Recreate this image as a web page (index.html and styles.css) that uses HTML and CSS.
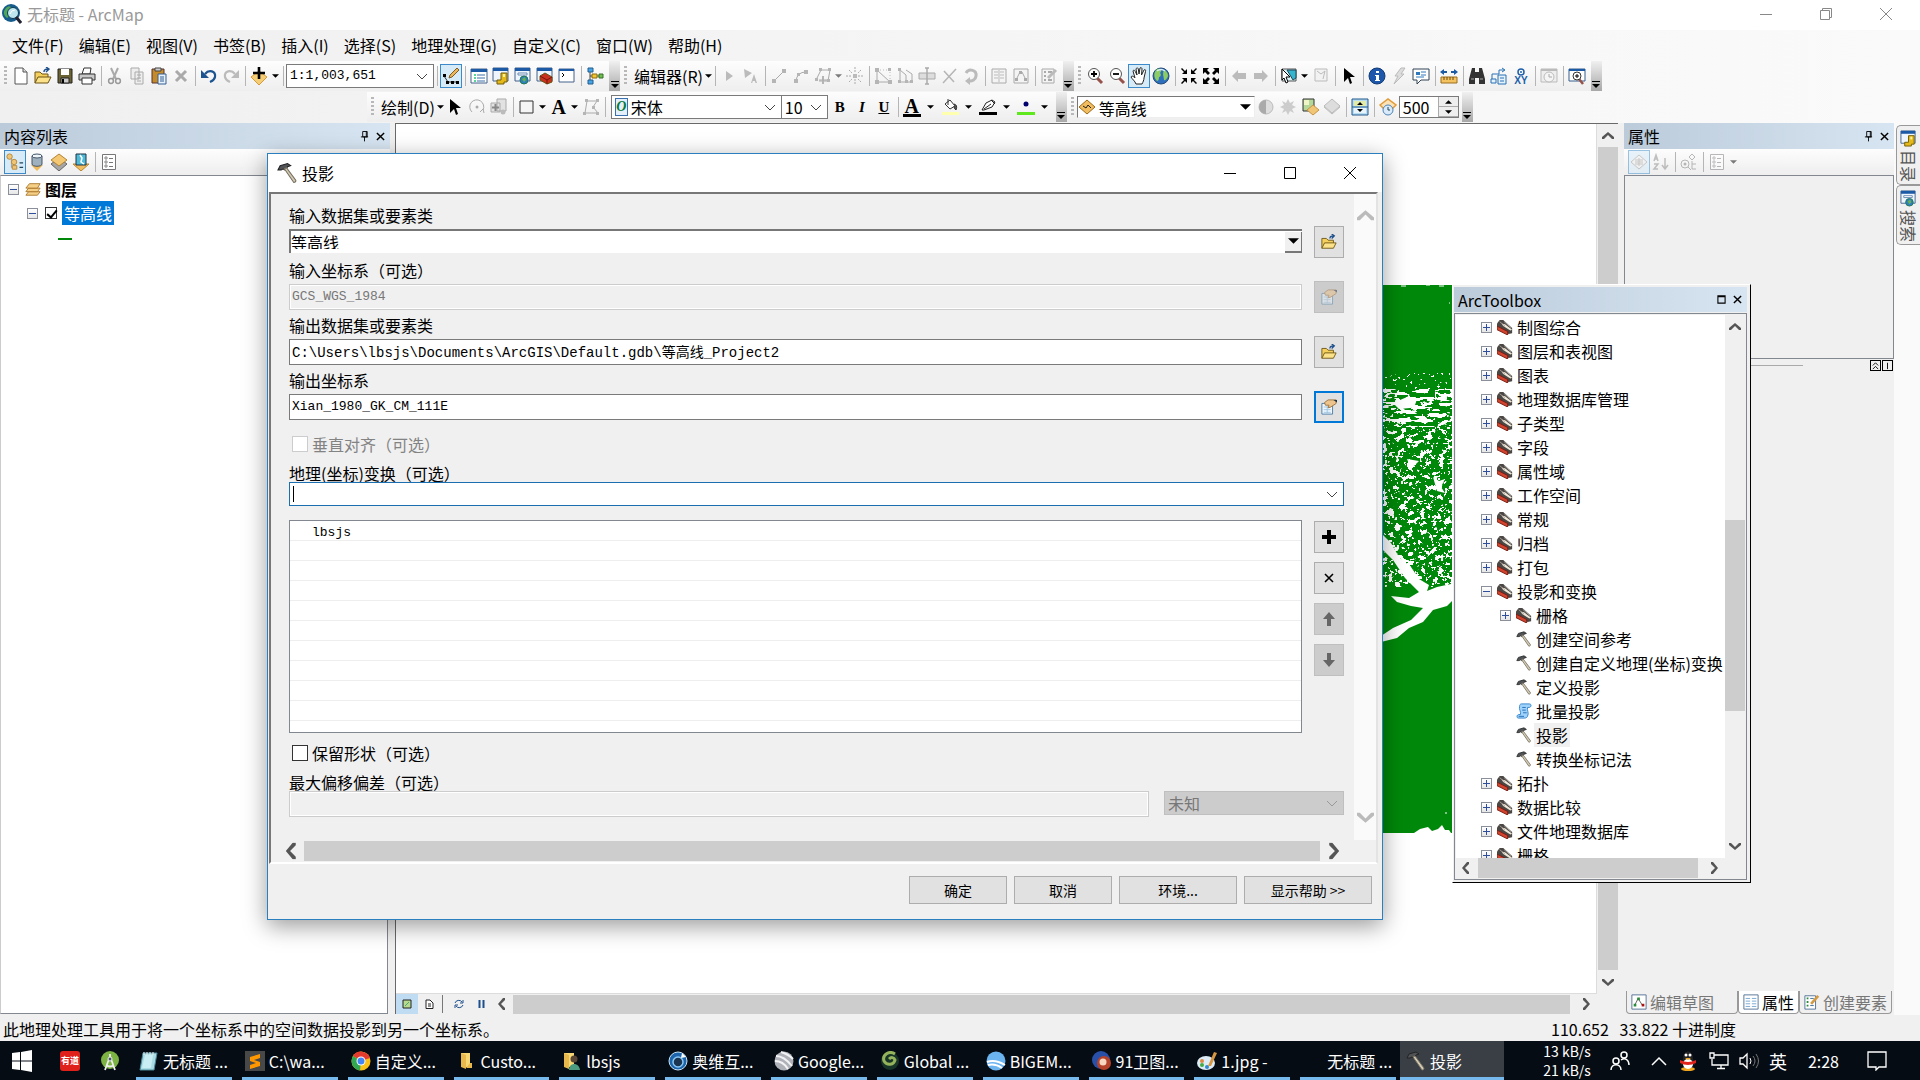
FILE: index.html
```html
<!DOCTYPE html>
<html lang="zh-CN">
<head>
    <meta charset="UTF-8">
    <meta name="viewport" content="width=device-width, initial-scale=1.0">
    <title>无标题 - ArcMap</title>
    <link rel="stylesheet" href="styles.css">
</head>
<body>
    <!-- icon sprite -->
    <svg class="sprite" width="0" height="0" aria-hidden="true">
        <symbol id="i-down" viewBox="0 0 8 4"><path d="M0 0h8L4 4z"/></symbol>
        <symbol id="i-chev" viewBox="0 0 12 7"><path d="M1 1l5 5 5-5" fill="none" stroke="currentColor"/></symbol>
        <symbol id="i-arrow" viewBox="0 0 12 8"><path d="M0 7V5l6-5 6 5v2H10L6 3 2 7z" fill="currentColor"/></symbol>
        <symbol id="i-x" viewBox="0 0 10 10"><path d="M1 1l8 8M9 1l-8 8" stroke="currentColor" stroke-width="1.6"/></symbol>
        <symbol id="i-pin" viewBox="0 0 10 12"><path d="M3 1h5v6H3zM1 7h8M5 7v5M7 1v6" fill="none" stroke="#000"/></symbol>
        <symbol id="i-new" viewBox="0 0 18 18"><path d="M3 1h8l4 4v12H3z" fill="#fff" stroke="#555"/><path d="M11 1v4h4" fill="#ddd" stroke="#555"/></symbol>
        <symbol id="i-open" viewBox="0 0 18 18"><path d="M1 16V5h5l2 2h6v3" fill="#f5cf5c" stroke="#6b5314"/><path d="M1 16l3-6h13l-3 6z" fill="#fbe28a" stroke="#6b5314"/><path d="M10 5c0-2 1-3 4-3M12 0l3 2-3 3" fill="none" stroke="#1c4f8c" stroke-width="1.4"/></symbol>
        <symbol id="i-save" viewBox="0 0 18 18"><path d="M2 2h14v14H2z" fill="#6b6432" stroke="#222"/><path d="M5 2h8v6H5z" fill="#fff"/><path d="M5 11h8v5H5z" fill="#ccc" stroke="#222"/><path d="M6 12h2v4H6z"/></symbol>
        <symbol id="i-print" viewBox="0 0 18 18"><path d="M4 7l2-6h7l-1 6z" fill="#fff" stroke="#333"/><path d="M1 7h16v6H1z" fill="#c9c9c9" stroke="#333"/><path d="M4 11h10v6H4z" fill="#fff" stroke="#333"/></symbol>
        <symbol id="i-cut" viewBox="0 0 18 18"><path d="M5 1l5 11M12 1L7 12" stroke="#aaa" stroke-width="2"/><g fill="none" stroke="#999" stroke-width="1.5"><circle cx="5" cy="14" r="2.4"/><circle cx="12" cy="14" r="2.4"/></g></symbol>
        <symbol id="i-copy" viewBox="0 0 18 18"><path d="M3 1h8v11H3zM7 5h8v12H7z" fill="#eee" stroke="#aaa"/><path d="M9 8h4M9 11h4M9 14h4" stroke="#aaa"/></symbol>
        <symbol id="i-paste" viewBox="0 0 18 18"><path d="M2 2h12v14H2z" fill="#c58a2a" stroke="#533"/><path d="M5 1h6v3H5z" fill="#ccc" stroke="#444"/><path d="M8 7h8v10H8z" fill="#e6f1fc" stroke="#345f92"/><path d="M10 10h4M10 12h4M10 14h4" stroke="#345f92"/></symbol>
        <symbol id="i-del" viewBox="0 0 18 18"><path d="M4 4l10 10M14 4L4 14" stroke="#aaa" stroke-width="3"/></symbol>
        <symbol id="i-undo" viewBox="0 0 18 18"><path d="M5 7c4-5 11-3 10 3-.5 3-3 4-5 5" fill="none" stroke="#1d5390" stroke-width="2.2"/><path d="M1 3v8h8z" fill="#1d5390"/></symbol>
        <symbol id="i-redo" viewBox="0 0 18 18"><path d="M13 7C9 2 2 4 3 10c.5 3 3 4 5 5" fill="none" stroke="#bbb" stroke-width="2.2"/><path d="M17 3v8H9z" fill="#bbb"/></symbol>
        <symbol id="i-add" viewBox="0 0 18 18"><path d="M1 10l8-6 8 6-8 8z" fill="#f5cd75" stroke="#d59b3a"/><path d="M9 0v12M3 6h12" stroke="#000" stroke-width="2.6"/></symbol>
        <symbol id="i-edit" viewBox="0 0 18 18"><path d="M2 9l4 6h10" fill="none" stroke="#333"/><path d="M1 7h3v3H1zM4 14h3v3H4zM9 14h3v3H9zM14 14h3v3h-3z"/><path d="M7 11l1-3 7-7 2 2-7 7z" fill="#edb757" stroke="#805c28"/></symbol>
        <symbol id="i-table" viewBox="0 0 18 18"><path d="M1 2h16v14H1z" fill="#fff" stroke="#44638c"/><path d="M1 2h16v3H1z" fill="#1d5aa5"/><path d="M4 8h2M4 11h2M4 14h2" stroke="#2c7" stroke-width="1.5"/><path d="M7 8h8M7 11h8M7 14h8" stroke="#3d6ea8"/></symbol>
        <symbol id="i-catalog" viewBox="0 0 18 18"><path d="M1 1h15v13H1z" fill="#eef5fc" stroke="#44638c"/><path d="M1 1h15v3H1z" fill="#1d5aa5"/><path d="M9 6h6v9h-3v2H5v-4h4z" fill="#e5b91a" stroke="#725d06"/><path d="M11 7h2v3h-2z" fill="#fff3a8"/></symbol>
        <symbol id="i-search" viewBox="0 0 18 18"><path d="M1 1h15v13H1z" fill="#eef5fc" stroke="#44638c"/><path d="M1 1h15v3H1z" fill="#1d5aa5"/><path d="M4 6h9v2H4z" fill="#fff" stroke="#6b8cb5"/><circle cx="10" cy="13" r="4" fill="#2d7fc4" stroke="#275"/><path d="M8 12l3-2 1 3-2 2z" fill="#6ab04c"/></symbol>
        <symbol id="i-tbx" viewBox="0 0 18 18"><path d="M1 1h15v13H1z" fill="#eef5fc" stroke="#44638c"/><path d="M1 1h15v3H1z" fill="#1d5aa5"/><path d="M4 9l5-3 7 4v5l-5 2-7-4z" fill="#c8321f" stroke="#651"/><path d="M4 9l7 4 5-3M11 13v4" fill="none" stroke="#7a1409"/></symbol>
        <symbol id="i-python" viewBox="0 0 18 18"><path d="M1 2h15v13H1z" fill="#fff" stroke="#44638c"/><path d="M1 3h15" stroke="#1d5aa5" stroke-width="2"/><path d="M4 6l2 2-2 2" fill="none" stroke="#000"/></symbol>
        <symbol id="i-model" viewBox="0 0 18 18"><path d="M4 4v10M4 9h9" stroke="#444"/><path d="M2 1h5v4H2zM2 13h5v4H2z" fill="#45a4e6" stroke="#245d8c"/><path d="M6 7h5v4H6z" fill="#f2c52d" stroke="#8b6b12"/><path d="M13 7h4v4h-4z" fill="#6dc04e" stroke="#376d25"/></symbol>
        <symbol id="i-play" viewBox="0 0 18 18"><path d="M6 4l7 5-7 5z" fill="#bbb"/></symbol>
        <symbol id="i-playa" viewBox="0 0 18 18"><path d="M2 2l8 4-7 5zM9 16l3-9 3 9h-1.500l-.7-2h-2l-.6 2z" fill="#bbb"/></symbol>
        <symbol id="i-line" viewBox="0 0 18 18"><path d="M4 14L14 4" stroke="#aaa"/><path d="M2 12h4v4H2zM12 2h4v4h-4z" fill="#b5b5b5"/></symbol>
        <symbol id="i-arc" viewBox="0 0 18 18"><path d="M4 14Q5 5 14 5" fill="none" stroke="#aaa"/><path d="M2 12h4v4H2zM12 3h4v4h-4zM5 6h3v3H5z" fill="#b5b5b5"/></symbol>
        <symbol id="i-trace" viewBox="0 0 18 18"><path d="M2 13L7 3h9l-2 11H5" fill="none" stroke="#aaa"/><path d="M5 1h3v3H5zM14 1h3v3h-3zM1 11h3v3H1zM13 12h3v3h-3zM8 9h2v8H8z" fill="#b5b5b5"/><path d="M5 13h8" stroke="#aaa"/></symbol>
        <symbol id="i-snap" viewBox="0 0 18 18"><path d="M9 0v6M9 12v6M0 9h6M12 9h6M3 3l3 3M15 3l-3 3M3 15l3-3M15 15l-3-3" stroke="#aaa" stroke-dasharray="2 1"/><path d="M7 7h4v4H7z" fill="#bbb"/></symbol>
        <symbol id="i-shape" viewBox="0 0 18 18"><path d="M3 3v12h13L3 3" fill="none" stroke="#aaa"/><path d="M3 3h13v12" fill="none" stroke="#bbb" stroke-dasharray="1 2"/><path d="M1 1h4v4H1zM1 13h4v4H1zM14 13h4v4h-4zM14 1h3v3h-3z" fill="#b5b5b5"/></symbol>
        <symbol id="i-mirror" viewBox="0 0 18 18"><path d="M4 2v13M4 3l6 5v7H4M10 15h6V7l-6-4" fill="none" stroke="#aaa"/><path d="M2 1h3v3H2zM2 13h3v3H2zM9 13h3v3H9zM14 13h3v3h-3z" fill="#b5b5b5"/></symbol>
        <symbol id="i-split" viewBox="0 0 18 18"><path d="M1 6h16v6H1z" fill="#ddd" stroke="#aaa"/><path d="M9 1v16M7 1h4M7 17h4" fill="none" stroke="#aaa" stroke-width="1.500"/></symbol>
        <symbol id="i-cross" viewBox="0 0 18 18"><path d="M3 16L16 2M4 4l10 11" stroke="#b5b5b5" stroke-width="1.500"/></symbol>
        <symbol id="i-rot" viewBox="0 0 18 18"><path d="M4 6c3-5 11-3 10 3-.5 4-4 5-6 5" fill="none" stroke="#bbb" stroke-width="3"/><path d="M8 10v8l-5-4z" fill="#bbb"/></symbol>
        <symbol id="i-attr" viewBox="0 0 18 18"><path d="M2 2h14v14H2z" fill="#f4f4f4" stroke="#aaa"/><path d="M4 5h4M4 8h4M4 11h4M10 5h4M10 8h4M10 11h4M9 3v12" stroke="#bbb"/></symbol>
        <symbol id="i-sketch" viewBox="0 0 18 18"><path d="M2 2h14v14H2z" fill="#f4f4f4" stroke="#aaa"/><path d="M4 13l4-8h2l4 8" fill="none" stroke="#aaa"/><path d="M3 11h3v3H3zM7 4h3v3H7zM12 11h3v3h-3z" fill="#aaa"/></symbol>
        <symbol id="i-create" viewBox="0 0 18 18"><path d="M2 2h12v14H2z" fill="#f4f4f4" stroke="#aaa"/><path d="M4 5h2M4 9h2M4 13h2M8 5h4M8 13h4" stroke="#aaa" stroke-width="2"/><path d="M8 11l8-8" stroke="#bbb" stroke-width="3"/></symbol>
        <symbol id="i-zin" viewBox="0 0 18 18"><path d="M11 11l5 5" stroke="#96524a" stroke-width="3"/><circle cx="8" cy="7" r="5.500" fill="#fff" stroke="#555"/><path d="M8 4v6M5 7h6" stroke="#000" stroke-width="1.800"/></symbol>
        <symbol id="i-zout" viewBox="0 0 18 18"><path d="M11 11l5 5" stroke="#96524a" stroke-width="3"/><circle cx="8" cy="7" r="5.500" fill="#fff" stroke="#555"/><path d="M5 7h6" stroke="#000" stroke-width="1.800"/></symbol>
        <symbol id="i-hand" viewBox="0 0 18 18"><path d="M6 17c-1-3-4-5-5-7 1-2 3 0 4 1L3 4c1-2 2 0 2.500 1L7 8 6 2c1-2 2-1 2.300 0L9 7l1-6c1-1 2 0 2 1l-.5 6L14 3c1-1 2 0 1.500 1.500L14 11c0 2-1 4-2 6z" fill="#fff" stroke="#222"/></symbol>
        <symbol id="i-globe" viewBox="0 0 18 18"><circle cx="9" cy="9" r="8" fill="#2d6fbd" stroke="#234c78"/><path d="M5 2c5-1 5 2 3 4 2 2 0 4-1 4 0 3-1 4-2 4-3-3-4-8 0-12zM12 3c3 1 4 4 4 6-1 3-3 5-4 4 0-3-2-6 0-10z" fill="#8ccc62"/><path d="M5 4q4-3 8 0" fill="none" stroke="#d7edff" stroke-width="1.500"/></symbol>
        <symbol id="i-fin" viewBox="0 0 18 18"><path d="M2 7h5V2L5 4 2 1 1 2l3 3zM16 7h-5V2l2 2 3-3 1 1-3 3zM2 11h5v5l-2-2-3 3-1-1 3-3zM16 11h-5v5l2-2 3 3 1-1-3-3z"/></symbol>
        <symbol id="i-fout" viewBox="0 0 18 18"><path d="M1 1h6L5 3l3 3-2 2-3-3-2 2zM17 1h-6l2 2-3 3 2 2 3-3 2 2zM1 17h6l-2-2 3-3-2-2-3 3-2-2zM17 17h-6l2-2-3-3 2-2 3 3 2-2z"/></symbol>
        <symbol id="i-back" viewBox="0 0 18 18"><path d="M2 9l6-6v3h8v6H8v3z" fill="#bbb"/></symbol>
        <symbol id="i-fwd" viewBox="0 0 18 18"><path d="M16 9l-6-6v3H2v6h8v3z" fill="#bbb"/></symbol>
        <symbol id="i-select" viewBox="0 0 18 18"><path d="M2 2h14v12H2z" fill="#d9f3f7" stroke="#555"/><path d="M7 3h9v8l-3 2z" fill="#36b5cf" stroke="#245"/><path d="M2 2l8 8H6l2 5-2 1-2-5-2 2z" fill="#fff" stroke="#000"/></symbol>
        <symbol id="i-clear" viewBox="0 0 18 18"><path d="M3 2h12v12H3z" fill="#f2f2f2" stroke="#bbb"/><path d="M5 4l4 3 4-3-2 8" fill="none" stroke="#bbb"/></symbol>
        <symbol id="i-cursor" viewBox="0 0 18 18"><path d="M4 1v14l4-4 2 6 2-1-2-6h5z"/></symbol>
        <symbol id="i-info" viewBox="0 0 18 18"><circle cx="9" cy="9" r="8" fill="#1c57ab" stroke="#123a77"/><path d="M8 4h3v2H8zM7 8h4v5h1v1H7v-1h1V9H7z" fill="#fff"/></symbol>
        <symbol id="i-bolt" viewBox="0 0 18 18"><path d="M11 1h4l-4 6h3L4 17l4-8H5z" fill="#ddd" stroke="#bbb"/></symbol>
        <symbol id="i-popup" viewBox="0 0 18 18"><path d="M1 2h16v11H9l-4 4v-4H1z" fill="#fff" stroke="#345"/><path d="M4 5h4v3H4z" fill="#2e78bd"/><path d="M9 5h5M9 8h5M4 10h8" stroke="#2e78bd"/></symbol>
        <symbol id="i-ruler" viewBox="0 0 18 18"><path d="M1 10h16v6H1z" fill="#f4c360" stroke="#9b6c1d"/><path d="M4 10v3M7 10v3M10 10v3M13 10v3" stroke="#6b4810"/><path d="M0 5l4-3v2h3v2H4v2zM18 5l-4-3v2h-3v2h3v2z" fill="#1d5aa5"/></symbol>
        <symbol id="i-find" viewBox="0 0 18 18"><path d="M4 1h3v4h4V1h3l3 11v5h-6v-6H7v6H1v-5z" fill="#333"/><path d="M3 12h3M12 12h3" stroke="#aaa"/></symbol>
        <symbol id="i-route" viewBox="0 0 18 18"><path d="M2 12V7h7V3h5M12 1l3 2-3 2" fill="none" stroke="#2871b5"/><path d="M1 12h5v4H1zM8 8h8v9H8z" fill="#e5f1fb" stroke="#2871b5"/><path d="M10 11h4M10 14h4" stroke="#2871b5"/></symbol>
        <symbol id="i-time" viewBox="0 0 18 18"><path d="M1 2h16v13H1z" fill="#eee" stroke="#bbb"/><path d="M1 3h16" stroke="#bbb" stroke-width="2"/><circle cx="9" cy="10" r="5" fill="#f5f5f5" stroke="#bbb"/><path d="M9 7v3h3" fill="none" stroke="#aaa"/></symbol>
        <symbol id="i-viewer" viewBox="0 0 18 18"><path d="M1 2h16v12H1z" fill="#fff" stroke="#345c8c"/><path d="M1 3h16" stroke="#1d5aa5" stroke-width="2"/><path d="M11 12l4 5" stroke="#96524a" stroke-width="2.500"/><circle cx="9" cy="9" r="4" fill="#fff" stroke="#333"/><path d="M9 7v4M7 9h4" stroke="#000"/></symbol>
        <symbol id="i-rotd" viewBox="0 0 18 18"><path d="M4 14a7 7 0 1 1 11-2M16 15l-1-4-3 3" fill="none" stroke="#aaa"/><circle cx="9" cy="9" r="1.500" fill="#aaa"/></symbol>
        <symbol id="i-tools" viewBox="0 0 18 18"><path d="M7 1h9v12H7zM1 5h9v9H1z" fill="#e2e2e2" stroke="#aaa"/><path d="M5.500 6v7M2 9.500h7" stroke="#888" stroke-width="2"/><circle cx="13" cy="14" r="2.500" fill="#bbb"/></symbol>
        <symbol id="i-rect" viewBox="0 0 18 18"><path d="M2 3h13v12H2z" fill="#f5f5f5" stroke="#333"/></symbol>
        <symbol id="i-poly" viewBox="0 0 18 18"><path d="M5 3h10l-4 6 5 6H3z" fill="none" stroke="#aaa"/><path d="M3 1h3v3H3zM14 1h3v3h-3zM10 8h3v3h-3zM14 14h3v3h-3zM1 14h3v3H1z" fill="#b5b5b5"/></symbol>
        <symbol id="i-bucket" viewBox="0 0 18 18"><path d="M4 6l5-4 5 6-5 3z" fill="#fff" stroke="#333"/><path d="M7 1v6M13 6q4 1 2 6-2-1-2-4" fill="#555" stroke="#333"/><path d="M1 14h17v3H1z" fill="#ffffb0"/></symbol>
        <symbol id="i-pen" viewBox="0 0 18 18"><path d="M3 12L7 5l6-3 3 2-3 5-8 3zM5 11l7-5M12 2l4 4" fill="#fff" stroke="#222"/><path d="M0 14h18v3H0z"/></symbol>
        <symbol id="i-dot" viewBox="0 0 18 18"><circle cx="9" cy="6" r="2.500" fill="#00006e"/><path d="M0 14h18v3H0z" fill="#5fe81d"/></symbol>
        <symbol id="i-contour" viewBox="0 0 18 18"><path d="M1 9l8-7 8 7-8 7z" fill="#f2bd5e" stroke="#9c6a1c"/><path d="M5 8l3 2 2-3 3 3" fill="none" stroke="#222"/></symbol>
        <symbol id="i-contrast" viewBox="0 0 18 18"><circle cx="9" cy="9" r="7" fill="#ddd" stroke="#bbb"/><path d="M9 2a7 7 0 0 0 0 14z" fill="#aaa"/></symbol>
        <symbol id="i-sun" viewBox="0 0 18 18"><path d="M9 1l2 4 4-2-2 4 4 2-4 2 2 4-4-2-2 4-2-4-4 2 2-4-4-2 4-2-2-4 4 2z" fill="#ccc"/></symbol>
        <symbol id="i-swipe" viewBox="0 0 18 18"><path d="M2 1h11v12H2z" fill="#b4d79a" stroke="#333"/><path d="M3 2h5v5H3z" fill="#f0f5c8"/><path d="M6 12l6-5 6 5-6 5z" fill="#f0c676" stroke="#c69445"/></symbol>
        <symbol id="i-gdiamond" viewBox="0 0 18 18"><path d="M1 8l8-7 8 7-8 7z" fill="#ddd" stroke="#bbb"/><path d="M1 9l8 7 8-7" fill="none" stroke="#bbb"/></symbol>
        <symbol id="i-flick" viewBox="0 0 18 18"><path d="M1 1h16v16H1z" fill="#b8dcf2" stroke="#235b8d"/><path d="M3 3h12v5H3z" fill="#e3ebaa"/><path d="M3 10h12v5H3z" fill="#e8f4fc"/><path d="M1 9h16" stroke="#235b8d"/><path d="M9 4l3 3H6zM9 14l3-3H6z"/></symbol>
        <symbol id="i-dclock" viewBox="0 0 18 18"><path d="M1 7l8-6 8 6-5 5H6z" fill="#fbe3b7" stroke="#e09c38" stroke-width="1.500"/><circle cx="9" cy="12" r="5" fill="#d9ebfb" stroke="#4d82b5"/><path d="M9 9v3h2" fill="none" stroke="#245"/></symbol>
        <symbol id="i-listo" viewBox="0 0 20 20"><path d="M6 5v11h6M6 9h6" fill="none" stroke="#999"/><circle cx="4" cy="4" r="3" fill="#f0c676" stroke="#b78737"/><circle cx="9" cy="10" r="3" fill="#f0c676" stroke="#b78737"/><path d="M7 14h5v4H7z" fill="#f0c676" stroke="#b78737"/><path d="M15 11h4M15 16h4" stroke="#245" stroke-width="1.500"/></symbol>
        <symbol id="i-source" viewBox="0 0 18 18"><path d="M3 12h12l-6 6z" fill="#efbb5c"/><path d="M4 3v8c0 3 10 3 10 0V3" fill="#9fb0bf" stroke="#456"/><ellipse cx="9" cy="3" rx="5" ry="2" fill="#eef5fa" stroke="#456"/></symbol>
        <symbol id="i-vis" viewBox="0 0 18 18"><path d="M1 11l8-6 8 6-8 7z" fill="#a5a5a5" stroke="#666"/><path d="M1 7l8-6 8 6-8 6z" fill="#f4c873" stroke="#b28335"/></symbol>
        <symbol id="i-selt" viewBox="0 0 18 18"><path d="M1 11h16l-8 7z" fill="#f2bd5e" stroke="#b98630"/><path d="M4 1h10v11H4z" fill="#4fbbd8" stroke="#234"/><path d="M8 2l2 3-1 4 3 2" fill="none" stroke="#fff" stroke-width="1.500"/></symbol>
        <symbol id="i-opts" viewBox="0 0 18 18"><path d="M2.500 1.500h13v15h-13z" fill="#fff" stroke="#777"/><path d="M5 4h2v2H5zM5 8h2v2H5zM5 12h2v2H5z" fill="none" stroke="#888"/><path d="M9 5.500h4M9 9.500h4M9 13.500h4" stroke="#777"/></symbol>
        <symbol id="i-layers" viewBox="0 0 18 18"><g fill="#f5cf86" stroke="#a8752a"><path d="M1 16l3-4h13l-3 4z"/><path d="M1 12l3-4h13l-3 4z"/><path d="M1 8l4-5h12l-3 5z"/></g></symbol>
        <symbol id="i-hammer" viewBox="0 0 20 20"><path d="M1 7l2-4 7-2 3 2-3 1-1 2-2 1-1-1-2 1z" fill="#505356" stroke="#222"/><path d="M7 6l2-1 9 12c0 2-1 2-2 2z" fill="#d2cab3" stroke="#746f60"/></symbol>
        <symbol id="i-toolset" viewBox="0 0 18 18"><path d="M0 5l3-4h4l10 9v6l-4 1L0 9z" fill="#4a4745"/><path d="M0 8l12 6v4L0 12z" fill="#d1452f" stroke="#76190e"/><path d="M5 5l4 1 8 6-2 1-8-5z" fill="#efe8d8"/><path d="M3 3l6 5M8 3l8 7" stroke="#a9a39a"/></symbol>
        <symbol id="i-script" viewBox="0 0 18 18"><path d="M6 1h9c3 0 2 4 0 4h-2c-1 3 2 6 0 10-1 2-3 2-4 2H3c-3 0-2-4 0-4h2c1-3-2-6-1-9 0-2 1-3 2-3z" fill="#9fd3fb" stroke="#2c7fc9"/><path d="M7 5h4M7 8h4M8 11h4M3 15h6" stroke="#1c66b0"/></symbol>
        <symbol id="i-prop" viewBox="0 0 18 18"><path d="M1 5h12v12H1z" fill="#eef7fd" stroke="#4479a3"/><path d="M3 9h8M3 12h8M3 15h8M7 8v8" stroke="#9cc4e0"/><path d="M4 4l4-3h9v4l-6 4-3 1 1-3H5z" fill="#edc48c" stroke="#99703d"/><path d="M14 1h4v3z" fill="#234"/></symbol>
        <symbol id="i-plus" viewBox="0 0 16 16"><path d="M8 1v14M1 8h14" stroke="#000" stroke-width="4"/></symbol>
        <symbol id="i-up" viewBox="0 0 16 16"><path d="M8 1l6 7h-4v7H6V8H2z" fill="#666"/></symbol>
    </svg>

    <div class="app">
        <header class="titlebar">
            <svg class="logo" viewBox="0 0 20 20"><circle cx="9" cy="9" r="9" fill="#155b8c"/><path d="M4 4c4-4 7 0 4 4-3 2 0 5-3 6-4-3-4-7-1-10z" fill="#4fa65a"/><circle cx="11" cy="9" r="5.500" fill="#bfe6ef" stroke="#0e3d55"/><path d="M8 10q1-4 5-4" fill="none" stroke="#fff"/><path d="M14 13l5 6" stroke="#223" stroke-width="3"/></svg>
            <span class="title">无标题 - ArcMap</span>
            <div class="win-buttons">
                <button aria-label="最小化"><svg width="12" height="12"><path d="M0 6.500h12" stroke="#888"/></svg></button>
                <button aria-label="还原"><svg width="12" height="12"><path d="M.5 2.500h9v9h-9zM2.500 2V.5h9v9H10" fill="none" stroke="#888"/></svg></button>
                <button aria-label="关闭"><svg width="12" height="12"><path d="M0 0l12 12M12 0L0 12" stroke="#888"/></svg></button>
            </div>
        </header>

        <nav class="menubar">
            <button>文件(F)</button><button>编辑(E)</button><button>视图(V)</button><button>书签(B)</button><button>插入(I)</button><button>选择(S)</button><button>地理处理(G)</button><button>自定义(C)</button><button>窗口(W)</button><button>帮助(H)</button>
        </nav>

        <div class="toolrow">
            <div class="toolbar">
                <i class="grip"></i>
                <button class="tool"><svg><use href="#i-new"/></svg></button>
                <button class="tool"><svg><use href="#i-open"/></svg></button>
                <button class="tool"><svg><use href="#i-save"/></svg></button>
                <button class="tool"><svg><use href="#i-print"/></svg></button>
                <i class="sep"></i>
                <button class="tool"><svg><use href="#i-cut"/></svg></button>
                <button class="tool"><svg><use href="#i-copy"/></svg></button>
                <button class="tool"><svg><use href="#i-paste"/></svg></button>
                <button class="tool"><svg><use href="#i-del"/></svg></button>
                <i class="sep"></i>
                <button class="tool"><svg><use href="#i-undo"/></svg></button>
                <button class="tool"><svg><use href="#i-redo"/></svg></button>
                <i class="sep"></i>
                <button class="tool"><svg><use href="#i-add"/></svg></button>
                <button class="drop"><svg><use href="#i-down"/></svg></button>
                <i class="sep"></i>
                <div class="combo scale"><select aria-label="比例"><option>1:1,003,651</option></select><svg><use href="#i-chev"/></svg></div>
                <i class="sep"></i>
                <button class="tool on"><svg><use href="#i-edit"/></svg></button>
                <i class="sep"></i>
                <button class="tool"><svg><use href="#i-table"/></svg></button>
                <button class="tool"><svg><use href="#i-catalog"/></svg></button>
                <button class="tool"><svg><use href="#i-search"/></svg></button>
                <button class="tool"><svg><use href="#i-tbx"/></svg></button>
                <button class="tool"><svg><use href="#i-python"/></svg></button>
                <i class="sep"></i>
                <button class="tool"><svg><use href="#i-model"/></svg></button>
                <button class="more" aria-label="更多"><svg><use href="#i-down"/></svg></button>
            </div>
            <div class="toolbar">
                <i class="grip"></i>
                <button class="menu">编辑器(R)<svg><use href="#i-down"/></svg></button>
                <i class="sep"></i>
                <button class="tool"><svg><use href="#i-play"/></svg></button>
                <button class="tool"><svg><use href="#i-playa"/></svg></button>
                <i class="sep"></i>
                <button class="tool"><svg><use href="#i-line"/></svg></button>
                <button class="tool"><svg><use href="#i-arc"/></svg></button>
                <button class="tool"><svg><use href="#i-trace"/></svg></button>
                <button class="drop off"><svg><use href="#i-down"/></svg></button>
                <button class="tool"><svg><use href="#i-snap"/></svg></button>
                <i class="sep"></i>
                <button class="tool"><svg><use href="#i-shape"/></svg></button>
                <button class="tool"><svg><use href="#i-mirror"/></svg></button>
                <button class="tool"><svg><use href="#i-split"/></svg></button>
                <button class="tool"><svg><use href="#i-cross"/></svg></button>
                <button class="tool"><svg><use href="#i-rot"/></svg></button>
                <i class="sep"></i>
                <button class="tool"><svg><use href="#i-attr"/></svg></button>
                <button class="tool"><svg><use href="#i-sketch"/></svg></button>
                <i class="sep"></i>
                <button class="tool"><svg><use href="#i-create"/></svg></button>
                <button class="more" aria-label="更多"><svg><use href="#i-down"/></svg></button>
            </div>
            <div class="toolbar">
                <i class="grip"></i>
                <button class="tool"><svg><use href="#i-zin"/></svg></button>
                <button class="tool"><svg><use href="#i-zout"/></svg></button>
                <button class="tool on"><svg><use href="#i-hand"/></svg></button>
                <button class="tool"><svg><use href="#i-globe"/></svg></button>
                <i class="sep"></i>
                <button class="tool"><svg><use href="#i-fin"/></svg></button>
                <button class="tool"><svg><use href="#i-fout"/></svg></button>
                <i class="sep"></i>
                <button class="tool"><svg><use href="#i-back"/></svg></button>
                <button class="tool"><svg><use href="#i-fwd"/></svg></button>
                <i class="sep"></i>
                <button class="tool"><svg><use href="#i-select"/></svg></button>
                <button class="drop"><svg><use href="#i-down"/></svg></button>
                <button class="tool"><svg><use href="#i-clear"/></svg></button>
                <i class="sep"></i>
                <button class="tool"><svg><use href="#i-cursor"/></svg></button>
                <i class="sep"></i>
                <button class="tool"><svg><use href="#i-info"/></svg></button>
                <button class="tool"><svg><use href="#i-bolt"/></svg></button>
                <button class="tool"><svg><use href="#i-popup"/></svg></button>
                <i class="sep"></i>
                <button class="tool"><svg><use href="#i-ruler"/></svg></button>
                <i class="sep"></i>
                <button class="tool"><svg><use href="#i-find"/></svg></button>
                <button class="tool"><svg><use href="#i-route"/></svg></button>
                <button class="tool xy"><svg viewBox="0 0 8 8"><circle cx="4" cy="4" r="3" fill="#fff" stroke="#2060a8" stroke-width="1.500"/><circle cx="4" cy="4" r="1" fill="#2060a8"/></svg>XY</button>
                <i class="sep"></i>
                <button class="tool"><svg><use href="#i-time"/></svg></button>
                <i class="sep"></i>
                <button class="tool"><svg><use href="#i-viewer"/></svg></button>
                <button class="more" aria-label="更多"><svg><use href="#i-down"/></svg></button>
            </div>
        </div>

        <div class="toolrow second">
            <div class="toolbar">
                <i class="grip"></i>
                <button class="menu">绘制(D)<svg><use href="#i-down"/></svg></button>
                <button class="tool"><svg><use href="#i-cursor"/></svg></button>
                <button class="tool"><svg><use href="#i-rotd"/></svg></button>
                <button class="tool"><svg><use href="#i-tools"/></svg></button>
                <i class="sep"></i>
                <button class="tool"><svg><use href="#i-rect"/></svg></button>
                <button class="drop"><svg><use href="#i-down"/></svg></button>
                <button class="tool letter">A</button>
                <button class="drop"><svg><use href="#i-down"/></svg></button>
                <button class="tool"><svg><use href="#i-poly"/></svg></button>
                <i class="sep"></i>
                <div class="combo font"><span class="font-icon">O</span><select aria-label="字体"><option>宋体</option></select><svg><use href="#i-chev"/></svg></div>
                <div class="combo size"><select aria-label="字号"><option>10</option></select><svg><use href="#i-chev"/></svg></div>
                <button class="tool letter small">B</button>
                <button class="tool letter small"><i>I</i></button>
                <button class="tool letter small"><u>U</u></button>
                <i class="sep"></i>
                <button class="tool letter bar">A</button>
                <button class="drop wide"><svg><use href="#i-down"/></svg></button>
                <button class="tool"><svg><use href="#i-bucket"/></svg></button>
                <button class="drop wide"><svg><use href="#i-down"/></svg></button>
                <button class="tool"><svg><use href="#i-pen"/></svg></button>
                <button class="drop wide"><svg><use href="#i-down"/></svg></button>
                <button class="tool"><svg><use href="#i-dot"/></svg></button>
                <button class="drop wide"><svg><use href="#i-down"/></svg></button>
                <button class="more" aria-label="更多"><svg><use href="#i-down"/></svg></button>
            </div>
            <div class="toolbar">
                <i class="grip"></i>
                <div class="combo layer"><svg class="pre"><use href="#i-contour"/></svg><select aria-label="图层"><option>等高线</option></select><svg class="tri"><use href="#i-down"/></svg></div>
                <button class="tool"><svg><use href="#i-contrast"/></svg></button>
                <button class="tool"><svg><use href="#i-sun"/></svg></button>
                <button class="tool"><svg><use href="#i-swipe"/></svg></button>
                <button class="tool"><svg><use href="#i-gdiamond"/></svg></button>
                <i class="sep"></i>
                <button class="tool"><svg><use href="#i-flick"/></svg></button>
                <i class="sep"></i>
                <button class="tool"><svg><use href="#i-dclock"/></svg></button>
                <div class="spin">
                    <input type="text" value="500" aria-label="毫秒">
                    <div class="spin-buttons">
                        <button aria-label="增加"><svg class="flip"><use href="#i-down"/></svg></button>
                        <button aria-label="减少"><svg><use href="#i-down"/></svg></button>
                    </div>
                </div>
                <button class="more" aria-label="更多"><svg><use href="#i-down"/></svg></button>
            </div>
        </div>

        <main class="workspace">
            <section class="panel contents">
                <div class="panel-head"><span>内容列表</span><button aria-label="固定"><svg class="pin"><use href="#i-pin"/></svg></button><button aria-label="关闭"><svg class="x"><use href="#i-x"/></svg></button></div>
                <div class="panel-tools">
                    <button class="tool on"><svg><use href="#i-listo"/></svg></button>
                    <button class="tool"><svg><use href="#i-source"/></svg></button>
                    <button class="tool"><svg><use href="#i-vis"/></svg></button>
                    <button class="tool"><svg><use href="#i-selt"/></svg></button>
                    <i class="sep"></i>
                    <button class="tool"><svg><use href="#i-opts"/></svg></button>
                </div>
                <div class="layer-tree">
                    <div class="layer-row"><i class="box minus"></i><svg class="ico"><use href="#i-layers"/></svg><b>图层</b></div>
                    <div class="layer-row child"><i class="box minus"></i><label><input type="checkbox" checked><span>等高线</span></label></div>
                    <div class="layer-symbol"></div>
                </div>
            </section>

            <section class="map">
                <div class="canvas">
                    <svg class="contours" viewBox="0 0 380 548" preserveAspectRatio="none">
                        <defs>
                            <filter id="ridges" x="0" y="0" width="100%" height="100%"><feTurbulence type="fractalNoise" baseFrequency=".09 .24" numOctaves="2" seed="11"/><feColorMatrix values="0 0 0 0 1  0 0 0 0 1  0 0 0 0 1  60 0 0 0 -31"/></filter>
                            <filter id="specks" x="0" y="0" width="100%" height="100%"><feTurbulence type="fractalNoise" baseFrequency=".16 .2" numOctaves="3" seed="4"/><feColorMatrix values="0 0 0 0 1  0 0 0 0 1  0 0 0 0 1  60 0 0 0 -35"/></filter>
                            <filter id="dust" x="0" y="0" width="100%" height="100%"><feTurbulence type="fractalNoise" baseFrequency=".3" numOctaves="2" seed="9"/><feColorMatrix values="0 0 0 0 1  0 0 0 0 1  0 0 0 0 1  60 0 0 0 -41"/></filter>
                        </defs>
                        <path d="M0 0h380v548h-80l-2-3h-4l-3-5-4 4-6 2-4-4-8 2-6 4H0z" fill="#00880a"/>
                        <rect y="88" width="380" height="210" filter="url(#dust)"/>
                        <rect y="104" width="380" height="38" filter="url(#ridges)"/>
                        <rect y="142" width="380" height="160" filter="url(#specks)"/>
                        <path d="M232 250l8 8 8 14 12 10 8 12 10 6-2 6 10-4 14-3v-6l6-4h20v26l-22-2-8 8-14 4-10 12-14 6-12 10-16 4v-6l12-8 18-8 12-12-12-2-14-4-6-6 18 2 10-6-14-14-12-18-14-14zM242 118l14-6 10 2-2 6 6 2-22 2zM256 174l12 2-8 8zM282 192l6 4 6-2-4 8 4 6-8-2z" fill="#fff"/>
                        <path d="M250 1h5M275 0h4M288 1h5M308 530h2M294 528h2M298 18h1" fill="none" stroke="#fff"/>
                    </svg>
                </div>
                <div class="vscroll"><svg class="arr"><use href="#i-arrow"/></svg><div class="thumb"></div><svg class="arr down"><use href="#i-arrow"/></svg></div>
                <div class="mapbar">
                    <button class="on" aria-label="数据视图"><svg viewBox="0 0 10 10"><path d="M1 1h8v8H1z" fill="#b9d98c" stroke="#222"/><path d="M3 7l4-4" stroke="#4a7"/></svg></button>
                    <button aria-label="布局视图"><svg viewBox="0 0 10 10"><path d="M2 1h4l3 3v5.500H2zM4 5h3M4 7h3" fill="#fff" stroke="#222"/></svg></button>
                    <i></i>
                    <button aria-label="刷新"><svg viewBox="0 0 10 10"><path d="M1 4a4 4 0 0 1 7-1M9 6a4 4 0 0 1-7 1M9 1v3H6M1 9V6h3" fill="none" stroke="#1c4f8c"/></svg></button>
                    <button aria-label="暂停"><svg viewBox="0 0 10 10"><path d="M3.500 1v8M7.500 1v8" stroke="#1c4f8c" stroke-width="2"/></svg></button>
                    <svg class="arr left"><use href="#i-arrow"/></svg><div class="thumb"></div><svg class="arr right"><use href="#i-arrow"/></svg>
                </div>
            </section>

            <section class="panel props">
                <div class="panel-head"><span>属性</span><button aria-label="固定"><svg class="pin"><use href="#i-pin"/></svg></button><button aria-label="关闭"><svg class="x"><use href="#i-x"/></svg></button></div>
                <div class="panel-tools">
                    <button class="tool on off"><svg viewBox="0 0 18 18"><path d="M1 9l8-7 8 7-8 7z" fill="#eee" stroke="#999"/><path d="M5 7h8M5 9h8M5 11h8M9 5v8" stroke="#999"/></svg></button>
                    <button class="tool off"><svg viewBox="0 0 18 18"><path d="M2 8l2-6 2 6M3 6h2M2 11h4l-4 5h4M13 5v10M10 12l3 4 3-4" fill="none" stroke="#888" stroke-width="1.500"/></svg></button>
                    <i class="sep"></i>
                    <button class="tool off"><svg viewBox="0 0 18 18"><circle cx="5" cy="11" r="4" fill="none" stroke="#777"/><circle cx="5" cy="11" r="1.500" fill="#777"/><path d="M8 14l3 3M12 1l3 3-3 3-3-3zM12 8v8h4M12 11h4" fill="none" stroke="#777"/></svg></button>
                    <i class="sep"></i>
                    <button class="tool off"><svg><use href="#i-opts"/></svg></button>
                    <button class="drop off"><svg><use href="#i-down"/></svg></button>
                </div>
                <div class="prop-box"></div>
                <div class="splitter"><hr><button aria-label="折叠"><svg viewBox="0 0 10 10"><path d="M2 5l3-3 3 3M2 9l3-3 3 3" fill="none" stroke="#000"/></svg></button><button aria-label="展开"><svg viewBox="0 0 10 10"><path d="M5 2v7" stroke="#000"/></svg></button></div>
                <div class="tabs">
                    <button class="wide"><svg viewBox="0 0 18 18"><path d="M1 1h16v16H1z" fill="#fff" stroke="#4a6b91"/><path d="M4 13l4-8 5 8" fill="none" stroke="#555"/><path d="M3 11h3v3H3zM7 4h3v3H7z" fill="#2a8b3a"/><path d="M12 11h3v3h-3z" fill="#a11"/></svg>编辑草图</button>
                    <button class="active"><svg viewBox="0 0 18 18"><path d="M1 1h16v16H1z" fill="#fff" stroke="#4a6b91"/><path d="M3 5h5M3 8h5M3 11h5M3 14h5M10 5h5M10 8h5M10 11h5M10 14h5" stroke="#6fa1cf"/></svg>属性</button>
                    <button><svg viewBox="0 0 18 18"><path d="M1 2h12v15H1z" fill="#fff" stroke="#4a6b91"/><path d="M3 5h2M3 9h2M3 13h2" stroke="#2a8b3a" stroke-width="2"/><path d="M7 5h4M7 13h4" stroke="#369"/><path d="M8 11l8-9" stroke="#d29b43" stroke-width="3"/></svg>创建要素</button>
                </div>
            </section>
            <aside class="side-tabs">
                <button><svg><use href="#i-catalog"/></svg><span>目录</span></button>
                <button><svg><use href="#i-search"/></svg><span>搜索</span></button>
            </aside>
        </main>

        <footer class="status"><span>此地理处理工具用于将一个坐标系中的空间数据投影到另一个坐标系。</span><span class="coords">110.652&nbsp;&nbsp; 33.822 十进制度</span></footer>

        <nav class="taskbar">
            <button class="pinned start" aria-label="开始"><svg viewBox="0 0 20 22"><path d="M0 3l8-1v8.500H0zM9 2l11-2v10.500H9zM0 11.500h8V20l-8-1zM9 11.500h11V22L9 20z" fill="#fff"/></svg></button>
            <button class="pinned youdao">有道</button>
            <button class="pinned" aria-label="Android Studio"><svg viewBox="0 0 20 20"><circle cx="10" cy="9" r="9" fill="#7cb342"/><path d="M10 3v3M9 8L5 19M11 8l4 11M6 14q4 3 8 0" fill="none" stroke="#eee" stroke-width="1.800"/><circle cx="10" cy="8" r="2" fill="#456" stroke="#eee"/></svg></button>
            <div class="tasks">
                <button class="task"><svg viewBox="0 0 20 20"><path d="M4 2h14l-3 17H1z" fill="#a9dbe4" stroke="#4c8a9b"/><path d="M5 1v3M8 1v3M11 1v3M14 1v3" stroke="#eee"/><path d="M6 4h8l-2 13H3z" fill="#c8edf2"/></svg><span>无标题 ...</span></button>
                <button class="task"><svg viewBox="0 0 20 20"><path d="M0 0h20v20H0z" fill="#484848"/><path d="M5 6l10-3v4L9 9l6 2v4L5 18v-4l6-2-6-2z" fill="#ff9800"/></svg><span>C:\wa...</span></button>
                <button class="task"><svg viewBox="0 0 20 20"><circle cx="10" cy="10" r="9.500" fill="#fbc116"/><path d="M10 10L2 5a9.500 9.500 0 0 1 17 2z" fill="#e33b2e"/><path d="M10 10L2 5a9.500 9.500 0 0 0 7 14.500z" fill="#33a852"/><circle cx="10" cy="10" r="4.500" fill="#fff"/><circle cx="10" cy="10" r="3.500" fill="#4285f4"/></svg><span>自定义...</span></button>
                <button class="task"><svg viewBox="0 0 20 20"><path d="M4 2h9v14H4z" fill="#f8d775"/><path d="M4 2l5 2v14l-5-2zM13 12h2v5h-6z" fill="#e9b84c"/></svg><span>Custo...</span></button>
                <button class="task"><svg viewBox="0 0 20 20"><path d="M2 2h10v14H2z" fill="#f8d775"/><path d="M2 2l5 2v14l-5-2z" fill="#e9b84c"/><circle cx="12" cy="8" r="3.500" fill="#5a4637"/><path d="M7 19c0-8 10-8 11 0z" fill="#4b9b80"/></svg><span>lbsjs</span></button>
                <button class="task"><svg viewBox="0 0 20 20"><circle cx="10" cy="10" r="9" fill="#1c65ac" stroke="#c9e6fb"/><circle cx="10" cy="11" r="5" fill="#1b3450" stroke="#8ac7f2" stroke-width="1.500"/><path d="M14 2l4 4-5 1z" fill="#fff"/></svg><span>奥维互...</span></button>
                <button class="task"><svg viewBox="0 0 20 20"><circle cx="10" cy="10" r="9.500" fill="#aeb1b8"/><path d="M2 5q8 0 16 10M1 10q8 0 13 8M7 1q7 2 12 7" fill="none" stroke="#f3f3f5" stroke-width="2"/></svg><span>Google...</span></button>
                <button class="task"><svg viewBox="0 0 20 20"><circle cx="10" cy="10" r="9" fill="#173528"/><path d="M15 3C9-1 2 4 4 10c3 5 10 4 11-1-1-3-4-3-6-1" fill="none" stroke="#94b35b" stroke-width="3"/></svg><span>Global ...</span></button>
                <button class="task"><svg viewBox="0 0 20 20"><circle cx="10" cy="10" r="9.500" fill="#6cb4f0"/><path d="M1 11q8-3 18 3M2 14q7-2 14 3" fill="none" stroke="#fff" stroke-width="2"/></svg><span>BIGEM...</span></button>
                <button class="task"><svg viewBox="0 0 20 20"><circle cx="9" cy="9" r="9" fill="#2950a8"/><circle cx="12" cy="12" r="7" fill="#b5422b"/><circle cx="11" cy="11" r="3.500" fill="#f8d7c2"/></svg><span>91卫图...</span></button>
                <button class="task"><svg viewBox="0 0 20 20"><ellipse cx="9" cy="12" rx="9" ry="7" fill="#dcebf5"/><circle cx="5" cy="10" r="2" fill="#d84"/><circle cx="5" cy="14" r="2" fill="#4a4"/><circle cx="10" cy="16" r="2" fill="#38c"/><path d="M11 15l6-14 3 1-6 13z" fill="#d89843"/></svg><span>1.jpg -</span></button>
                <button class="task"><svg></svg><span>无标题 ...</span></button>
                <button class="task current"><svg><use href="#i-hammer"/></svg><span>投影</span></button>
            </div>
            <div class="tray">
                <div class="net"><span>13 kB/s</span><span>21 kB/s</span></div>
                <svg class="people" viewBox="0 0 20 20"><g fill="none" stroke="#fff" stroke-width="1.500"><circle cx="14" cy="4" r="3"/><circle cx="6" cy="10" r="3"/><path d="M1 19c0-7 10-7 10 0M11 9c4-3 8 0 8 5"/></g></svg>
                <svg class="caret" viewBox="0 0 16 10"><path d="M1 9l7-7 7 7" fill="none" stroke="#fff" stroke-width="1.500"/></svg>
                <svg class="qq" viewBox="0 0 18 20"><ellipse cx="9" cy="18" rx="7" ry="2" fill="#f0a51e"/><path d="M4 8c0-10 10-10 10 0l2 6H2z" fill="#222"/><ellipse cx="9" cy="13" rx="5" ry="5" fill="#fff"/><path d="M1 9q8 4 16 0v3q-8 4-16 0z" fill="#e0231d"/><circle cx="7" cy="4" r="1.500" fill="#fff"/><circle cx="11" cy="4" r="1.500" fill="#fff"/><path d="M6 7h6l-3 2z" fill="#f0a51e"/></svg>
                <svg class="monitor" viewBox="0 0 20 18"><path d="M5 3h14v10H3V7M12 13v3M8 16.500h8M1 1h4v5H1z" fill="none" stroke="#fff" stroke-width="1.300"/></svg>
                <svg class="sound" viewBox="0 0 20 18"><path d="M1 6h3l4-4v14l-4-4H1z" fill="none" stroke="#fff" stroke-width="1.300"/><path d="M11 6q2 3 0 6" fill="none" stroke="#fff"/><path d="M14 4q4 5 0 10M17 2q5 7 0 14" fill="none" stroke="#777"/></svg>
                <span class="ime">英</span>
                <time>2:28</time>
                <svg class="note" viewBox="0 0 20 20"><path d="M1 1h18v15h-7l-3 3v-3H1z" fill="none" stroke="#fff" stroke-width="1.300"/></svg>
            </div>
        </nav>

        <section class="toolbox">
            <div class="panel-head"><span>ArcToolbox</span><button aria-label="最大化"><svg class="x" viewBox="0 0 10 10"><path d="M1 1h8v8H1zM1 2h8" fill="none" stroke="#000" stroke-width="1.200"/></svg></button><button aria-label="关闭"><svg class="x"><use href="#i-x"/></svg></button></div>
            <div class="toolbox-body">
                <ul class="tree">
                    <li><i class="box plus"></i><svg><use href="#i-toolset"/></svg><span>制图综合</span></li>
                    <li><i class="box plus"></i><svg><use href="#i-toolset"/></svg><span>图层和表视图</span></li>
                    <li><i class="box plus"></i><svg><use href="#i-toolset"/></svg><span>图表</span></li>
                    <li><i class="box plus"></i><svg><use href="#i-toolset"/></svg><span>地理数据库管理</span></li>
                    <li><i class="box plus"></i><svg><use href="#i-toolset"/></svg><span>子类型</span></li>
                    <li><i class="box plus"></i><svg><use href="#i-toolset"/></svg><span>字段</span></li>
                    <li><i class="box plus"></i><svg><use href="#i-toolset"/></svg><span>属性域</span></li>
                    <li><i class="box plus"></i><svg><use href="#i-toolset"/></svg><span>工作空间</span></li>
                    <li><i class="box plus"></i><svg><use href="#i-toolset"/></svg><span>常规</span></li>
                    <li><i class="box plus"></i><svg><use href="#i-toolset"/></svg><span>归档</span></li>
                    <li><i class="box plus"></i><svg><use href="#i-toolset"/></svg><span>打包</span></li>
                    <li><i class="box minus"></i><svg><use href="#i-toolset"/></svg><span>投影和变换</span></li>
                    <li class="sub"><i class="box plus"></i><svg><use href="#i-toolset"/></svg><span>栅格</span></li>
                    <li class="leaf"><svg><use href="#i-hammer"/></svg><span>创建空间参考</span></li>
                    <li class="leaf"><svg><use href="#i-hammer"/></svg><span>创建自定义地理(坐标)变换</span></li>
                    <li class="leaf"><svg><use href="#i-hammer"/></svg><span>定义投影</span></li>
                    <li class="leaf"><svg><use href="#i-script"/></svg><span>批量投影</span></li>
                    <li class="leaf"><svg><use href="#i-hammer"/></svg><span class="picked">投影</span></li>
                    <li class="leaf"><svg><use href="#i-hammer"/></svg><span>转换坐标记法</span></li>
                    <li><i class="box plus"></i><svg><use href="#i-toolset"/></svg><span>拓扑</span></li>
                    <li><i class="box plus"></i><svg><use href="#i-toolset"/></svg><span>数据比较</span></li>
                    <li><i class="box plus"></i><svg><use href="#i-toolset"/></svg><span>文件地理数据库</span></li>
                    <li><i class="box plus"></i><svg><use href="#i-toolset"/></svg><span>栅格</span></li>
                </ul>
                <div class="vscroll"><svg class="arr"><use href="#i-arrow"/></svg><div class="thumb"></div><svg class="arr down"><use href="#i-arrow"/></svg></div>
                <div class="hscroll"><svg class="arr left"><use href="#i-arrow"/></svg><div class="thumb"></div><svg class="arr right"><use href="#i-arrow"/></svg></div>
            </div>
        </section>

        <section class="dialog">
            <div class="dialog-title">
                <svg class="hammer"><use href="#i-hammer"/></svg><span>投影</span>
                <div class="win-buttons">
                    <button aria-label="最小化"><svg width="12" height="12"><path d="M0 6.500h12" stroke="#000"/></svg></button>
                    <button aria-label="最大化"><svg width="12" height="12"><path d="M.5.5h11v11H.5z" fill="none" stroke="#000"/></svg></button>
                    <button aria-label="关闭"><svg width="12" height="12"><path d="M0 0l12 12M12 0L0 12" stroke="#000"/></svg></button>
                </div>
            </div>
            <div class="dialog-body">
                <form class="form">
                    <div class="field">
                        <label for="in-data">输入数据集或要素类</label>
                        <div class="combo sunken"><select id="in-data"><option>等高线</option></select><span class="combo-btn"><svg><use href="#i-down"/></svg></span></div>
                        <button type="button" class="btn"><svg><use href="#i-open"/></svg></button>
                    </div>
                    <div class="field">
                        <label for="in-cs">输入坐标系（可选）</label>
                        <input type="text" id="in-cs" value="GCS_WGS_1984" disabled>
                        <button type="button" class="btn" disabled><svg><use href="#i-prop"/></svg></button>
                    </div>
                    <div class="field">
                        <label for="out-data">输出数据集或要素类</label>
                        <input type="text" id="out-data" class="path" value="C:\Users\lbsjs\Documents\ArcGIS\Default.gdb\等高线_Project2">
                        <button type="button" class="btn"><svg><use href="#i-open"/></svg></button>
                    </div>
                    <div class="field">
                        <label for="out-cs">输出坐标系</label>
                        <input type="text" id="out-cs" value="Xian_1980_GK_CM_111E">
                        <button type="button" class="btn focus"><svg><use href="#i-prop"/></svg></button>
                    </div>
                    <label class="check off-check"><input type="checkbox" disabled>垂直对齐（可选）</label>
                    <label class="tight" for="geo">地理(坐标)变换（可选）</label>
                    <div class="combo geo"><i class="caret-bar"></i><select id="geo"><option></option></select><svg><use href="#i-chev"/></svg></div>
                    <div class="list-row">
                        <div class="list"><div>lbsjs</div></div>
                        <div class="list-buttons">
                            <button type="button" class="btn"><svg><use href="#i-plus"/></svg></button>
                            <button type="button" class="btn"><svg class="cross"><use href="#i-x"/></svg></button>
                            <button type="button" class="btn" disabled><svg><use href="#i-up"/></svg></button>
                            <button type="button" class="btn" disabled><svg class="flip"><use href="#i-up"/></svg></button>
                        </div>
                    </div>
                    <label class="check keep"><input type="checkbox">保留形状（可选）</label>
                    <label class="tight" for="max-dev">最大偏移偏差（可选）</label>
                    <div class="dev-row">
                        <input type="text" id="max-dev" disabled>
                        <div class="combo unit"><select aria-label="单位" disabled><option>未知</option></select><svg><use href="#i-chev"/></svg></div>
                    </div>
                </form>
                <div class="vscroll pale"><svg class="arr"><use href="#i-arrow"/></svg><svg class="arr down"><use href="#i-arrow"/></svg></div>
                <div class="hscroll big"><svg class="arr left"><use href="#i-arrow"/></svg><div class="thumb"></div><svg class="arr right"><use href="#i-arrow"/></svg></div>
            </div>
            <div class="dialog-foot">
                <button>确定</button><button>取消</button><button class="mid">环境...</button><button class="help">显示帮助 &gt;&gt;</button>
            </div>
        </section>
    </div>
</body>
</html>
```
FILE: styles.css
```css
* {
    box-sizing: border-box;
}

body {
    margin: 0;
    font-family: "Noto Sans CJK SC", sans-serif;
    font-size: 16px;
    line-height: 24px;
    color: #000;
    background: #f0f0f0;
    overflow: hidden;
}

button, input, select {
    font: inherit;
    color: inherit;
    margin: 0;
    padding: 0;
    border: 0;
    border-radius: 0;
    background: none;
    appearance: none;
}

svg {
    display: block;
    flex: none;
}

.sprite {
    position: absolute;
}

.app {
    position: relative;
    display: flex;
    flex-direction: column;
    height: 100vh;
}

/* title and menus */
.titlebar {
    display: flex;
    align-items: center;
    height: 30px;
    padding: 0 0 2px 2px;
    background: #fff;
    color: #999;
}

.logo {
    width: 20px;
    height: 22px;
    margin-right: 5px;
}

.win-buttons {
    display: flex;
    margin-left: auto;
}

.win-buttons button {
    display: grid;
    place-items: center;
    width: 60px;
    height: 28px;
}

.titlebar .win-buttons {
    padding-right: 4px;
}

.menubar {
    display: flex;
    gap: 15px;
    height: 31px;
    padding: 0 12px;
    background: linear-gradient(90deg, #f0f0f0, #fafafa);
}

.menubar button {
    line-height: 31px;
}

/* toolbars */
.toolrow {
    display: flex;
    height: 31px;
    background: linear-gradient(90deg, #f0f0f0, #fafafa);
}

.toolrow.second {
    padding-left: 367px;
}

.toolbar {
    display: flex;
    align-items: center;
    height: 30px;
    padding-left: 2px;
    background: linear-gradient(#fdfdfd, #eee);
}

.grip {
    width: 3px;
    height: 20px;
    margin: 0 3px 0 2px;
    background: repeating-linear-gradient(#b8b8b8 0 2px, transparent 2px 4px);
}

.sep {
    width: 1px;
    height: 20px;
    margin: 0 2px 0 3px;
    background: #b5b5b5;
}

.tool {
    display: grid;
    place-items: center;
    flex: none;
    width: 22px;
    height: 24px;
}

.tool svg {
    width: 18px;
    height: 18px;
}

.tool.on {
    border: 1px solid #3c8ac9;
    background: #d6eaf8;
}

.tool.xy {
    align-content: center;
    font: bold 10px/9px "Liberation Sans", sans-serif;
    color: #2060a8;
}

.xy svg {
    width: 8px;
    height: 8px;
}

.letter {
    font: bold 20px "Liberation Serif", serif;
}

.letter.small {
    font-size: 15px;
}

.letter.bar {
    width: 18px;
    height: 20px;
    margin: 0 2px;
    border-bottom: 3px solid #000;
    line-height: 16px;
}

.drop {
    display: grid;
    place-items: center;
    width: 10px;
    height: 22px;
}

.drop.wide {
    width: 16px;
}

.drop svg, .menu svg {
    width: 7px;
    height: 4px;
}

.off {
    opacity: .5;
}

.menu {
    display: flex;
    align-items: center;
    gap: 2px;
    padding-left: 4px;
}

.more {
    display: flex;
    align-items: flex-end;
    justify-content: center;
    align-self: stretch;
    width: 11px;
    margin-left: 3px;
    padding-bottom: 3px;
    background: linear-gradient(#f0f0f0, #a8a8a8);
}

.more svg {
    width: 8px;
    height: 7px;
    padding-top: 2px;
    border-top: 1px solid #000;
}

.combo {
    position: relative;
    display: flex;
    align-items: center;
    height: 24px;
    border: 1px solid #7a7a7a;
    background: #fff;
}

.combo select {
    flex: 1;
    min-width: 0;
    height: 100%;
    padding-left: 3px;
    line-height: 22px;
}

.combo > svg {
    width: 12px;
    height: 7px;
    margin-right: 5px;
    color: #444;
}

.scale {
    width: 148px;
    font-family: "Liberation Mono", monospace;
    font-size: 13px;
}

.font {
    width: 171px;
    margin-left: 3px;
}

.size {
    width: 46px;
    margin-right: 1px;
    border-left: 0;
}

.font-icon {
    width: 13px;
    height: 18px;
    margin-left: 3px;
    border: 1px solid #3a70ad;
    background: #e3effb;
    color: #087a37;
    font: italic bold 14px/16px "Liberation Serif", serif;
    text-align: center;
}

.combo.layer {
    width: 178px;
    height: 22px;
    border-color: #777 #eee #eee #777;
}

.combo.layer .pre {
    width: 18px;
    height: 18px;
    margin: 0;
}

.combo.layer .tri {
    width: 11px;
    height: 6px;
    margin-right: 3px;
}

.spin {
    display: flex;
    width: 60px;
    height: 22px;
    border: 1px solid #7a7a7a;
    background: #fff;
}

.spin input {
    flex: 1;
    min-width: 0;
    padding-left: 3px;
}

.spin-buttons {
    display: flex;
    flex-direction: column;
    width: 20px;
    background: #eee;
    border-left: 1px solid #aaa;
}

.spin-buttons button {
    flex: 1;
    display: grid;
    place-items: center;
    border-bottom: 1px solid #aaa;
}

.spin-buttons svg {
    width: 7px;
    height: 4px;
}

.flip {
    transform: scaleY(-1);
}

/* docked panels */
.workspace {
    flex: 1;
    display: flex;
    min-height: 0;
}

.panel {
    display: flex;
    flex-direction: column;
    height: calc(100% - 1px);
}

.contents {
    width: 390px;
}

.panel-head {
    display: flex;
    align-items: center;
    gap: 4px;
    height: 26px;
    padding: 0 4px;
    background: linear-gradient(90deg, #bccbda, #d7e5f2);
}

.panel-head span {
    margin-right: auto;
}

.panel-head button {
    display: grid;
    place-items: center;
    width: 12px;
    height: 20px;
}

.pin {
    width: 9px;
    height: 12px;
}

.x {
    width: 9px;
    height: 9px;
}

.panel-tools {
    display: flex;
    align-items: center;
    height: 26px;
    padding-left: 4px;
    background: linear-gradient(#fdfdfd, #eee);
}

.layer-tree {
    flex: 1;
    margin-right: 2px;
    padding-top: 1px;
    border: 1px solid #828790;
    border-left-color: #ccc;
    background: #fff;
}

.layer-row {
    display: flex;
    align-items: center;
    gap: 6px;
    height: 24px;
    padding-left: 7px;
}

.layer-row.child {
    padding-left: 26px;
}

.layer-row .ico {
    width: 16px;
    height: 16px;
}

.layer-row b {
    margin-left: -2px;
}

.layer-row label {
    display: flex;
    align-items: center;
    gap: 5px;
    margin-left: 1px;
}

.layer-row span {
    padding: 0 2px;
    background: #0078d7;
    color: #fff;
}

.box {
    flex: none;
    width: 11px;
    height: 11px;
    border: 1px solid #8a8f99;
    background:
        linear-gradient(#2f4f9c, #2f4f9c) center / 7px 1px no-repeat,
        linear-gradient(#fff, #e6e6e6);
}

.box.plus {
    background:
        linear-gradient(#2f4f9c, #2f4f9c) center / 7px 1px no-repeat,
        linear-gradient(#2f4f9c, #2f4f9c) center / 1px 7px no-repeat,
        linear-gradient(#fff, #e6e6e6);
}

input[type="checkbox"] {
    position: relative;
    width: 12px;
    height: 12px;
    border: 1px solid #333;
    background: #fff;
}

input[type="checkbox"]:checked::after {
    content: "";
    position: absolute;
    left: 3px;
    top: 0;
    width: 4px;
    height: 8px;
    border: solid #000;
    border-width: 0 2px 2px 0;
    transform: rotate(40deg);
}

.layer-symbol {
    width: 14px;
    height: 2px;
    margin: 13px 0 0 57px;
    background: #00880a;
}

/* map */
.map {
    flex: 1;
    display: grid;
    grid-template: 1fr 20px / 1fr 21px;
    height: calc(100% - 1px);
    margin: 0 6px 0 5px;
    border-top: 1px solid #696969;
    border-left: 1px solid #696969;
}

.canvas {
    position: relative;
    overflow: hidden;
    border: solid #dcdcdc;
    border-width: 0 1px 1px 0;
    background: #fff;
}

.contours {
    position: absolute;
    left: 755px;
    top: 161px;
    width: 380px;
    height: 548px;
}

.vscroll {
    display: flex;
    flex-direction: column;
    align-items: center;
    padding: 8px 0;
    background: #f0f0f0;
    color: #555;
}

.arr {
    width: 12px;
    height: 8px;
    margin: 0 4px;
}

.down {
    transform: scaleY(-1);
}

.left {
    transform: rotate(-90deg);
}

.right {
    transform: rotate(90deg);
}

.vscroll .thumb {
    flex: 1;
    width: 20px;
    margin: 7px 0 8px;
    background: #cdcdcd;
}

.mapbar {
    display: flex;
    align-items: center;
    color: #555;
}

.mapbar button {
    display: grid;
    place-items: center;
    width: 22px;
    height: 20px;
}

.mapbar button svg {
    width: 10px;
    height: 10px;
}

.mapbar .on {
    background: #c0dcf3;
}

.mapbar i {
    width: 1px;
    height: 18px;
    margin: 0 5px 0 2px;
    background: #777;
}

.mapbar .thumb {
    flex: 1;
    height: 19px;
    margin: 0 6px 0 1px;
    background: #cdcdcd;
}

.mapbar .right {
    margin-right: 5px;
}

.props {
    width: 270px;
}

.prop-box {
    height: 184px;
    border: 1px solid #828790;
}

.splitter {
    display: flex;
    justify-content: flex-end;
    gap: 1px;
    padding: 1px 1px 0 0;
}

.splitter hr {
    flex: 1;
    height: 1px;
    margin: 5px 66px 0 0;
    border: 0;
    background: #aaa;
}

.splitter button {
    width: 11px;
    height: 11px;
    border: 1px solid #000;
}

.splitter button svg {
    width: 9px;
    height: 9px;
}

.tabs {
    display: flex;
    height: 23px;
    margin-top: auto;
    padding: 0 2px;
}

.tabs button {
    display: flex;
    align-items: center;
    gap: 3px;
    height: 23px;
    padding: 0 4px;
    border: solid #999;
    border-width: 0 1px 1px;
    border-radius: 0 0 4px 4px;
    color: #777;
    white-space: nowrap;
}

.tabs .wide {
    flex: 1;
}

.tabs .active {
    background: #fff;
    color: #000;
}

.tabs svg {
    width: 16px;
    height: 16px;
}

.side-tabs {
    width: 26px;
    padding: 2px 0 0 2px;
    background: #fafafa;
}

.side-tabs button {
    display: flex;
    flex-direction: column;
    align-items: center;
    gap: 3px;
    width: 24px;
    height: 60px;
    padding-top: 4px;
    border: solid #999;
    border-width: 1px 0 1px 1px;
    border-radius: 5px 0 0 5px;
    background: #f0f0f0;
    color: #555;
}

.side-tabs svg {
    width: 17px;
    height: 17px;
}

.side-tabs span {
    writing-mode: vertical-rl;
    text-orientation: sideways;
    line-height: 20px;
}

.status {
    display: flex;
    height: 26px;
    padding: 0 184px 0 3px;
    line-height: 28px;
}

.coords {
    margin-left: auto;
}

/* taskbar */
.taskbar {
    display: flex;
    align-items: center;
    height: 39px;
    background: #060c14;
    color: #fff;
}

.pinned {
    display: grid;
    place-items: center;
    width: 20px;
    height: 39px;
    margin-right: 16px;
}

.pinned svg {
    width: 20px;
    height: 22px;
}

.start {
    width: 44px;
}

.youdao {
    height: 20px;
    margin-right: 20px;
    border-radius: 3px;
    background: #e0201b;
    font-size: 9px;
    font-weight: bold;
    line-height: 20px;
}

.tasks {
    flex: 0 1 1368px;
    display: grid;
    grid-template-columns: repeat(12, 1fr) 98px;
    column-gap: 10px;
    height: 39px;
}

.task {
    display: flex;
    align-items: center;
    gap: 4px;
    min-width: 0;
    padding: 3px 0 0 3px;
    border-bottom: 3px solid #76b9ed;
    white-space: nowrap;
}

.task svg {
    width: 20px;
    height: 20px;
}

.task.current {
    margin-left: -6px;
    padding-left: 6px;
    background: #3a3f45;
}

.tray {
    display: flex;
    align-items: center;
    margin-left: auto;
    padding-right: 33px;
}

.net {
    display: flex;
    flex-direction: column;
    margin-right: 19px;
    font-size: 14px;
    line-height: 19px;
}

.people, .note {
    width: 20px;
    height: 20px;
}

.caret {
    width: 16px;
    height: 10px;
    margin-left: 21px;
}

.qq {
    width: 18px;
    height: 20px;
    margin-left: 12px;
}

.monitor {
    width: 20px;
    height: 18px;
    margin-left: 12px;
}

.sound {
    width: 20px;
    height: 18px;
    margin-left: 10px;
}

.ime {
    margin-left: 10px;
    font-size: 18px;
}

.tray time {
    margin: 0 28px 0 21px;
}

/* floating toolbox */
.toolbox {
    position: absolute;
    left: 1452px;
    top: 284px;
    width: 299px;
    height: 599px;
    padding: 2px 3px 2px 1px;
    border: 1px solid #000;
    border-top-color: #fff;
    border-left-color: #fff;
    background: #f0f0f0;
}

.toolbox .panel-head {
    height: 25px;
}

.toolbox-body {
    display: grid;
    grid-template: 1fr 20px / 1fr 20px;
    height: 567px;
    margin-top: 1px;
    padding: 1px;
    border: 1px solid #828790;
}

.tree {
    margin: 0;
    padding: 0;
    list-style: none;
    overflow: hidden;
    background: #fff;
}

.tree li {
    display: flex;
    align-items: center;
    height: 24px;
    padding-left: 25px;
    white-space: nowrap;
}

.tree .sub {
    padding-left: 44px;
}

.tree .leaf {
    padding-left: 60px;
}

.tree svg {
    width: 16px;
    height: 16px;
}

.tree .box {
    margin-right: 5px;
}

.tree span {
    padding: 0 2px;
    margin-left: 2px;
}

.tree .picked {
    background: #f0f0f0;
}

.toolbox .vscroll .thumb {
    flex: 0 0 191px;
    margin: 189px 0 auto;
}

.hscroll {
    display: flex;
    align-items: center;
    grid-column: 1 / 3;
    color: #555;
}

.hscroll .thumb {
    flex: 1;
    height: 20px;
    margin: 0 6px 0 2px;
    background: #cdcdcd;
}

.toolbox .hscroll .right {
    margin-right: 25px;
}

/* projection dialog */
.dialog {
    position: absolute;
    left: 267px;
    top: 153px;
    width: 1116px;
    height: 767px;
    border: 1px solid #2a7fbe;
    background: #f0f0f0;
    box-shadow: 0 6px 22px rgba(0, 0, 0, .4);
}

.dialog-title {
    display: flex;
    align-items: center;
    gap: 4px;
    height: 38px;
    padding: 0 2px 0 9px;
    background: #fff;
}

.hammer {
    width: 21px;
    height: 22px;
}

.dialog-body {
    display: grid;
    grid-template: 646px 22px / 1fr 22px;
    margin: 0 4px 0 1px;
    border: 2px solid;
    border-color: #777 #e3e3e3 #fff #777;
}

.form {
    padding: 9px 10px 0 18px;
}

.form label {
    display: block;
}

.field {
    display: grid;
    grid-template: 26px 29px / 1fr 30px;
    column-gap: 12px;
}

.field label {
    line-height: 24px;
}

.field .btn {
    grid-area: 1 / 2 / 3 / 3;
    align-self: end;
}

.form input[type="text"] {
    width: 100%;
    height: 26px;
    padding: 0 2px 2px;
    border: 1px solid #7a7a7a;
    background: #fff;
    font-family: "Liberation Mono", "Noto Sans CJK SC", monospace;
    font-size: 13px;
}

.form input.path {
    font-size: 14px;
}

.form input[type="text"]:disabled {
    border-color: #ccc;
    background: #f0f0f0;
    box-shadow: inset 0 0 0 1px #fff;
    color: #777;
}

.btn {
    display: grid;
    place-items: center;
    width: 30px;
    height: 32px;
    border: 1px solid #adadad;
    background: #e1e1e1;
}

.btn svg {
    width: 16px;
    height: 16px;
}

.btn .cross {
    width: 10px;
    height: 10px;
}

.btn:disabled {
    border-color: #bfbfbf;
    background: #ccc;
}

.btn.focus {
    border: 2px solid #0078d7;
}

.field .btn:disabled svg {
    opacity: .5;
}

.sunken {
    border: 0;
    border-top: 2px solid #777;
    border-left: 2px solid #777;
}

.sunken select {
    padding: 0 0 4px;
}

.combo-btn {
    display: grid;
    place-items: center;
    width: 17px;
    height: 21px;
    border: solid #777;
    border-width: 0 1px 2px 0;
    background: #f0f0f0;
}

.combo-btn svg {
    width: 11px;
    height: 6px;
}

.form .check {
    display: flex;
    align-items: center;
    gap: 4px;
    height: 41px;
    padding-left: 3px;
}

.form .check input {
    width: 16px;
    height: 16px;
}

.form .keep {
    height: 40px;
}

.off-check {
    color: #838383;
}

.off-check input {
    border-color: #ccc;
}

.form .tight {
    line-height: 18px;
}

.geo {
    border-color: #1a6fb0;
}

.caret-bar {
    width: 1px;
    height: 16px;
    margin-left: 3px;
    background: #000;
}

.list-row {
    display: grid;
    grid-template-columns: 1fr 30px;
    gap: 12px;
    margin-top: 14px;
}

.list {
    height: 213px;
    padding: 0 2px;
    border: 1px solid #828790;
    background: repeating-linear-gradient(#fff 0 19px, #eee 19px 20px);
    font-family: "Liberation Mono", monospace;
    font-size: 13px;
}

.list div {
    padding-left: 20px;
}

.list-buttons {
    display: flex;
    flex-direction: column;
    gap: 9px;
    padding-top: 1px;
}

.dev-row {
    display: grid;
    grid-template-columns: 1fr 180px;
    gap: 15px;
}

.unit {
    border-color: #bfbfbf;
    background: #ccc;
    color: #777;
}

.unit select {
    opacity: 1;
}

.unit > svg {
    color: #999;
}

.pale {
    justify-content: space-between;
    padding: 16px 0 17px;
    background: #fafafa;
    color: #bbb;
}

.pale .arr, .big .arr {
    width: 17px;
    height: 12px;
}

.dialog .big .thumb {
    margin: 0 1px 0 0;
}

.dialog .hscroll .left {
    margin-left: 12px;
}

.dialog .hscroll .right {
    margin-right: 34px;
}

.dialog-foot {
    display: flex;
    justify-content: flex-end;
    gap: 7px;
    padding: 12px 10px;
    font-size: 14px;
}

.dialog-foot button {
    width: 98px;
    height: 28px;
    border: 1px solid #adadad;
    background: #e1e1e1;
}

.dialog-foot .mid {
    width: 118px;
}

.dialog-foot .help {
    width: 128px;
}
```
